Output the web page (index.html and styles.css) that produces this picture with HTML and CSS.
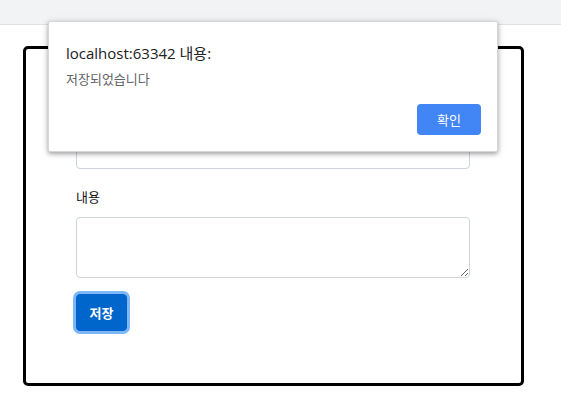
FILE: index.html
```html
<!DOCTYPE html>
<html lang="ko">
<head>
<meta charset="utf-8">
<title>저장</title>
<link rel="stylesheet" href="styles.css">
</head>
<body>
<div class="topbar"></div>
<main class="page">
  <form class="card">
    <div class="group">
      <label class="label" for="title">제목</label>
      <input class="control" id="title" type="text">
    </div>
    <div class="group">
      <label class="label" for="content">내용</label>
      <textarea class="control area" id="content" rows="2"></textarea>
    </div>
    <button class="save" type="button">저장</button>
  </form>
</main>
<div class="dialog">
  <div class="dlg-title">localhost:63342 내용:</div>
  <div class="dlg-msg">저장되었습니다</div>
  <div class="dlg-actions"><button class="ok" type="button">확인</button></div>
</div>
</body>
</html>
```

FILE: styles.css
```css
* { box-sizing: border-box; }
html, body { margin: 0; padding: 0; background: #fff; }
body {
  font-family: "Noto Sans", "Noto Sans CJK KR", sans-serif;
  color: #212529;
  width: 561px;
  height: 417px;
  overflow: hidden;
  position: relative;
}
.topbar {
  height: 25px;
  background: #f1f3f4;
  border-bottom: 1px solid #dfe1e5;
}
.page {
  padding: 21px 0 0 23px;
}
.card {
  width: 501px;
  height: 340px;
  border: 3px solid #000;
  border-radius: 5px;
  padding: 50px 51px 50px 50px;
  margin: 0;
}
.group { margin-bottom: 16px; }
.label {
  display: block;
  font-family: "Noto Sans CJK KR", sans-serif;
  font-size: 13px;
  line-height: 24px;
  margin-bottom: 8px;
  color: #111;
}
.control {
  display: block;
  width: 394px;
  height: 38px;
  border: 1px solid #ced4da;
  border-radius: 4px;
  background: #fff;
  padding: 6px 12px;
  font-size: 16px;
  font-family: inherit;
  margin: 0;
}
.area {
  height: 61px;
  resize: vertical;
}
.save {
  display: block;
  width: 51px;
  height: 37px;
  margin: 0;
  padding: 0;
  border: 1px solid #0062cc;
  border-radius: 4px;
  background: #0066cc;
  color: #fff;
  font-family: "Noto Sans CJK KR", sans-serif;
  font-weight: 700;
  font-size: 13px;
  box-shadow: 0 0 0 3px #7cb8f7;
}
.dialog {
  position: absolute;
  left: 48px;
  top: 21px;
  width: 450px;
  height: 131px;
  background: #fff;
  border: 1px solid #d6d6d6;
  border-radius: 2px;
  box-shadow: 0 2px 4px rgba(0,0,0,0.3), 0 1px 8px rgba(0,0,0,0.12);
  padding: 21px 16px 16px 17px;
}
.dlg-title {
  font-family: "Open Sans", "Noto Sans CJK KR", sans-serif;
  font-size: 15px;
  line-height: 20px;
  color: #202124;
}
.dlg-msg {
  font-family: "Noto Sans CJK KR", sans-serif;
  font-size: 13px;
  line-height: 18px;
  color: #5f6368;
  margin-top: 7px;
}
.dlg-actions {
  display: flex;
  justify-content: flex-end;
  margin-top: 16px;
}
.ok {
  width: 64px;
  height: 31px;
  border: 0;
  border-radius: 4px;
  background: #4285f4;
  color: #fff;
  font-family: "Noto Sans CJK KR", sans-serif;
  font-size: 13px;
  padding: 0;
}
```
